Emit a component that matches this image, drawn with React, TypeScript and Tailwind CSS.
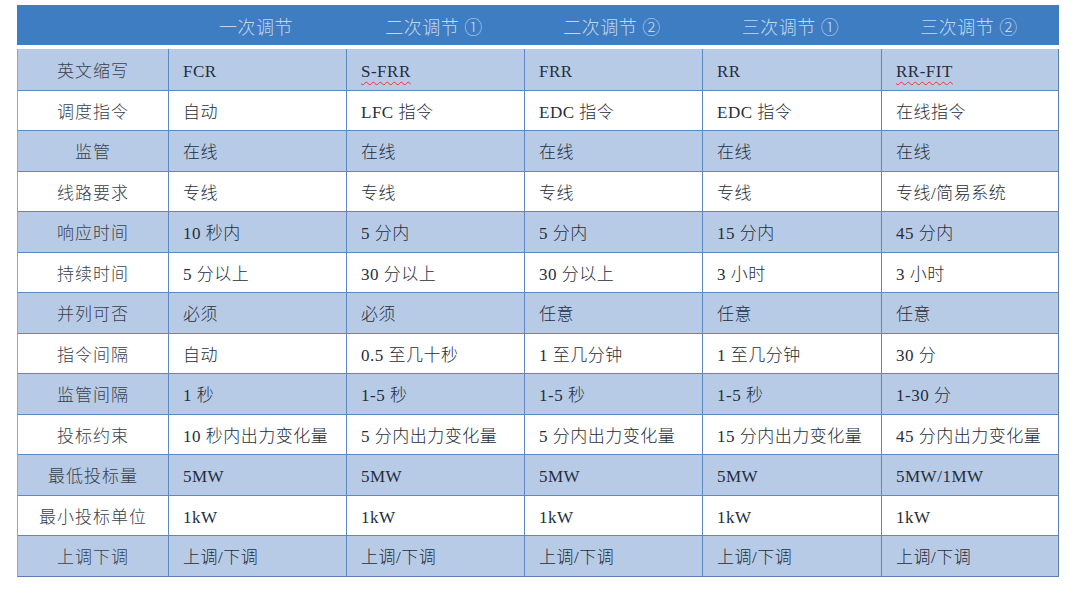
import React from "react";

const headers = ["", "一次调节", "二次调节 ①", "二次调节 ②", "三次调节 ①", "三次调节 ②"];

const rows: string[][] = [
  ["英文缩写", "FCR", "S-FRR", "FRR", "RR", "RR-FIT"],
  ["调度指令", "自动", "LFC 指令", "EDC 指令", "EDC 指令", "在线指令"],
  ["监管", "在线", "在线", "在线", "在线", "在线"],
  ["线路要求", "专线", "专线", "专线", "专线", "专线/简易系统"],
  ["响应时间", "10 秒内", "5 分内", "5 分内", "15 分内", "45 分内"],
  ["持续时间", "5 分以上", "30 分以上", "30 分以上", "3 小时", "3 小时"],
  ["并列可否", "必须", "必须", "任意", "任意", "任意"],
  ["指令间隔", "自动", "0.5 至几十秒", "1 至几分钟", "1 至几分钟", "30 分"],
  ["监管间隔", "1 秒", "1-5 秒", "1-5 秒", "1-5 秒", "1-30 分"],
  ["投标约束", "10 秒内出力变化量", "5 分内出力变化量", "5 分内出力变化量", "15 分内出力变化量", "45 分内出力变化量"],
  ["最低投标量", "5MW", "5MW", "5MW", "5MW", "5MW/1MW"],
  ["最小投标单位", "1kW", "1kW", "1kW", "1kW", "1kW"],
  ["上调下调", "上调/下调", "上调/下调", "上调/下调", "上调/下调", "上调/下调"],
];

const widths = ["w-[150px]", "w-[178px]", "w-[178px]", "w-[178px]", "w-[179px]", "w-[178px]"];
const wavy = new Set(["S-FRR", "RR-FIT"]);

export default function App() {
  return (
    <div
      className="w-[1080px] h-[597px] bg-white pt-[5px] pl-[17px]"
      style={{ fontFamily: '"Liberation Serif", "Noto Sans CJK SC", serif' }}
    >
      <div className="w-[1042px] flex flex-col">
        <div className="flex h-[40px] bg-[#3f7dc3]">
          {headers.map((h, i) => (
            <div
              key={i}
              className={`${widths[i]} shrink-0 flex items-center justify-center text-[18px] font-light tracking-[0.5px] text-[#c2d7ef] pt-[7px]`}
            >
              {h}
            </div>
          ))}
        </div>
        <div className="h-[4px] bg-white" />
        <div className="flex flex-col border-l border-[#8fa6c4] border-r-[1.5px] border-r-[#5c7fae] border-b-[1.5px] border-b-[#5c7fae]">
          {rows.map((r, ri) => (
            <div
              key={ri}
              className={`flex h-[40.5px] ${ri % 2 === 0 ? "bg-[#b7cbe6]" : "bg-white"} ${
                ri > 0 ? "border-t-[1.5px] border-[#5d88c2]" : ""
              }`}
            >
              {r.map((c, ci) => (
                <div
                  key={ci}
                  className={`${widths[ci]} shrink-0 flex items-center text-[17px] font-light pt-[4px] ${
                    ci === 0
                      ? "justify-center text-[#3a404c] tracking-[1px]"
                      : "justify-start pl-[14px] text-[#262d3a] tracking-[0.5px] border-l-[1.5px] border-[#5d88c2]"
                  }`}
                >
                  <span
                    className={
                      wavy.has(c)
                        ? "underline decoration-wavy decoration-red-500 decoration-1 underline-offset-[4px]"
                        : ""
                    }
                  >
                    {c}
                  </span>
                </div>
              ))}
            </div>
          ))}
        </div>
      </div>
    </div>
  );
}
